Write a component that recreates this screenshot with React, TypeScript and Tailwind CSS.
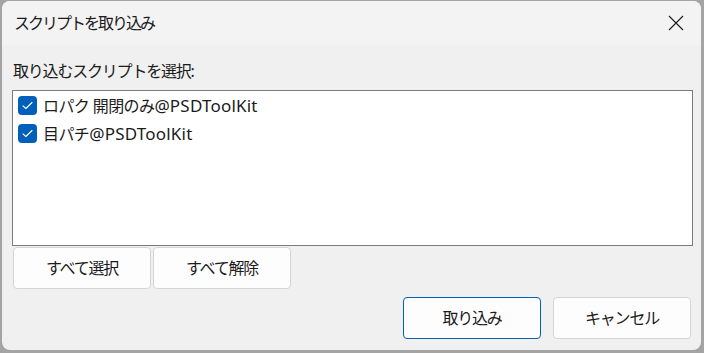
import React from 'react';

const font = { fontFamily: '"Noto Sans", "Noto Sans CJK JP", sans-serif' };

const items = [
  { jp: 'ロパク 開閉のみ', en: '@PSDToolKit' },
  { jp: '目パチ', en: '@PSDToolKit' },
];

function Checkbox() {
  return (
    <span className="flex h-[19px] w-[19px] shrink-0 items-center justify-center rounded-[4px] bg-[#005fb8]">
      <svg width="11" height="9" viewBox="0 0 11 9" fill="none">
        <path d="M1 4.8 L3.9 7.5 L10 1.5" stroke="white" strokeWidth="1.1" strokeLinecap="round" strokeLinejoin="round" />
      </svg>
    </span>
  );
}

function Button({ label, primary }: { label: string; primary?: boolean }) {
  return (
    <button
      className={`flex h-[42px] w-[138px] items-center justify-center rounded-[4px] bg-[#fdfdfd] text-[16px] tracking-[-1.2px] text-[#1b1b1b] ${
        primary ? 'border border-[#005fb8]' : 'border border-[#d5d5d5]'
      }`}
    >
      {label}
    </button>
  );
}

export default function App() {
  return (
    <div className="h-[353px] w-[704px] bg-[#a4a4a4] pb-[3px] pl-[2px] pr-[3px] pt-[1px]" style={font}>
      <div className="flex h-full flex-col overflow-hidden rounded-[8px] bg-[#f0f0f0]">
        {/* Title bar */}
        <div className="flex h-[44px] shrink-0 items-center justify-between bg-[#f3f3f3] pl-[12px] pr-[17px]">
          <span className="text-[16px] tracking-[-2px] text-[#1b1b1b]">スクリプトを取り込み</span>
          <svg width="16" height="16" viewBox="0 0 16 16">
            <path d="M1 1 L15 15 M15 1 L1 15" stroke="#1b1b1b" strokeWidth="1.1" />
          </svg>
        </div>

        {/* Body */}
        <div className="flex flex-col pl-[10px]">
          <div className="mt-[16px] h-[20px] pl-[1px] text-[16px] leading-[20px] tracking-[-1.2px] text-[#1b1b1b]">
            取り込むスクリプトを選択:
          </div>
          <div className="mt-[9px] flex h-[156px] w-[681px] flex-col border border-[#7b7b7b] bg-white pl-[5px] pt-[5px]">
            {items.map(item => (
              <div key={item.jp} className="flex h-[28px] items-start gap-[6px]">
                <Checkbox />
                <span className="whitespace-pre text-[16px] leading-[19px] text-[#1b1b1b]">
                  <span className="tracking-[-0.6px]">{item.jp}</span>
                  <span className="text-[17px] tracking-[0.2px]">{item.en}</span>
                </span>
              </div>
            ))}
          </div>
          <div className="ml-[1px] mt-[1px] flex gap-[2px]">
            <Button label="すべて選択" />
            <Button label="すべて解除" />
          </div>
          <div className="mt-[8px] flex justify-end gap-[12px] pr-[10px]">
            <Button label="取り込み" primary />
            <Button label="キャンセル" />
          </div>
        </div>
      </div>
    </div>
  );
}
